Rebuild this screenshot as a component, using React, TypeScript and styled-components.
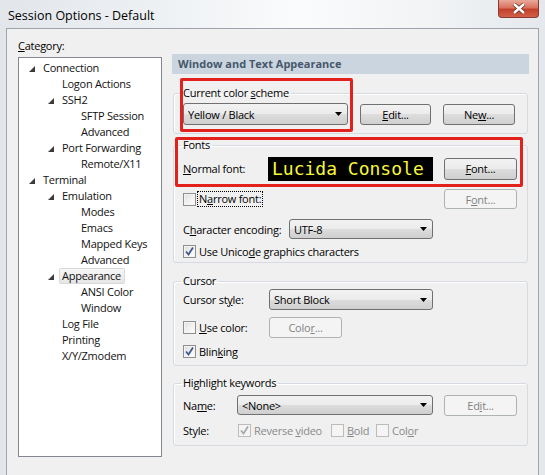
import styled, { createGlobalStyle } from "styled-components";

const GlobalStyle = createGlobalStyle`
  html, body {
    margin: 0;
    padding: 0;
  }
  body {
    font-family: "Open Sans", "Noto Sans", sans-serif;
    font-size: 11px;
    letter-spacing: -0.25px;
    color: #000;
  }
  * {
    box-sizing: border-box;
  }
`;

const tree = [
    {text: "Connection", level: 0, open: true},
    {text: "Logon Actions", level: 1},
    {text: "SSH2", level: 1, open: true},
    {text: "SFTP Session", level: 2},
    {text: "Advanced", level: 2},
    {text: "Port Forwarding", level: 1, open: true},
    {text: "Remote/X11", level: 2},
    {text: "Terminal", level: 0, open: true},
    {text: "Emulation", level: 1, open: true},
    {text: "Modes", level: 2},
    {text: "Emacs", level: 2},
    {text: "Mapped Keys", level: 2},
    {text: "Advanced", level: 2},
    {text: "Appearance", level: 1, open: true, selected: true},
    {text: "ANSI Color", level: 2},
    {text: "Window", level: 2},
    {text: "Log File", level: 1},
    {text: "Printing", level: 1},
    {text: "X/Y/Zmodem", level: 1},
];

const Check = ({checked, disabled}: { checked?: boolean; disabled?: boolean }) => (
    <CheckBox $disabled={disabled}>
        {checked && (
            <svg width="11" height="11" viewBox="0 0 11 11">
                <path d="M2 5.5 L4.5 8.5 L9 1.5" fill="none"
                      stroke={disabled ? "#a8a8a8" : "#3d5a8c"} strokeWidth="1.8"/>
            </svg>
        )}
    </CheckBox>
);

const Combo = ({value, width}: { value: string; width: number }) => (
    <ComboBox $w={width}>
        <span>{value}</span>
        <svg width="7" height="4" viewBox="0 0 7 4">
            <polygon points="0,0 7,0 3.5,4" fill="#000"/>
        </svg>
    </ComboBox>
);

export default function App() {
    return (
        <>
            <GlobalStyle/>
            <Window>
                <TitleBar>
                    <Title>Session Options - Default</Title>
                    <CloseButton>
                        <svg width="14" height="11" viewBox="0 0 14 11">
                            <path d="M2 1 L12 10 M12 1 L2 10" stroke="#6b2a20" strokeWidth="4"/>
                            <path d="M2 1 L12 10 M12 1 L2 10" stroke="#fff" strokeWidth="2.4"/>
                        </svg>
                    </CloseButton>
                </TitleBar>
                <Client>
                    <LeftCol>
                        <CategoryLabel><u>C</u>ategory:</CategoryLabel>
                        <Tree>
                            {tree.map((item, index) => (
                                <TreeRow key={index} $level={item.level}>
                                    <Expander>
                                        {item.open && (
                                            <svg width="6" height="6" viewBox="0 0 6 6">
                                                <polygon points="6,0 6,6 0,6" fill="#3a3a3a"/>
                                            </svg>
                                        )}
                                    </Expander>
                                    <TreeLabel $selected={item.selected}>{item.text}</TreeLabel>
                                </TreeRow>
                            ))}
                        </Tree>
                    </LeftCol>
                    <RightCol>
                        <Header>Window and Text Appearance</Header>

                        <Group $mt={12}>
                            <Legend>Current color <u>s</u>cheme</Legend>
                            <GroupBody $pt={3} $pb={8}>
                                <Row $h={22}>
                                    <Combo value="Yellow / Black" width={165}/>
                                    <Button $w={71} $ml={12}><u>E</u>dit...</Button>
                                    <Button $w={72} $ml={12}>Ne<u>w</u>...</Button>
                                </Row>
                            </GroupBody>
                        </Group>

                        <Group $mt={4}>
                            <Legend>Fonts</Legend>
                            <GroupBody $pt={4} $pb={4}>
                                <Row $h={25}>
                                    <Label $w={85}><u>N</u>ormal font:</Label>
                                    <FontPreview>Lucida Console</FontPreview>
                                    <Button $w={73} $ml="auto" $h={22}><u>F</u>ont...</Button>
                                </Row>
                                <Row $h={20} $mt={8}>
                                    <Check/>
                                    <FocusLabel>N<u>a</u>rrow font:</FocusLabel>
                                    <Button $w={73} $ml="auto" $h={20} disabled>F<u>o</u>nt...</Button>
                                </Row>
                                <Row $h={20} $mt={10}>
                                    <Label $w={106}>C<u>h</u>aracter encoding:</Label>
                                    <Combo value="UTF-8" width={144}/>
                                </Row>
                                <Row $h={14} $mt={5}>
                                    <Check checked/>
                                    <CheckText>Use Unico<u>d</u>e graphics characters</CheckText>
                                </Row>
                            </GroupBody>
                        </Group>

                        <Group $mt={11}>
                            <Legend>Cursor</Legend>
                            <GroupBody $pt={1} $pb={7}>
                                <Row $h={21}>
                                    <Label $w={86}>Cursor st<u>y</u>le:</Label>
                                    <Combo value="Short Block" width={164}/>
                                </Row>
                                <Row $h={21} $mt={7}>
                                    <CheckGroup $w={86}>
                                        <Check/>
                                        <CheckText><u>U</u>se color:</CheckText>
                                    </CheckGroup>
                                    <Button $w={73} $h={21} disabled>Colo<u>r</u>...</Button>
                                </Row>
                                <Row $h={14} $mt={6}>
                                    <Check checked/>
                                    <CheckText>Blin<u>k</u>ing</CheckText>
                                </Row>
                            </GroupBody>
                        </Group>

                        <Group $mt={10}>
                            <Legend>Highlight keywords</Legend>
                            <GroupBody $pt={5} $pb={8}>
                                <Row $h={20}>
                                    <Label $w={54}>Na<u>m</u>e:</Label>
                                    <Combo value="<None>" width={196}/>
                                    <Button $w={73} $ml="auto" $h={21} disabled>Ed<u>i</u>t...</Button>
                                </Row>
                                <Row $h={14} $mt={8}>
                                    <Label $w={55}>Style:</Label>
                                    <CheckGroup $w={93}>
                                        <Check checked disabled/>
                                        <CheckText $disabled>Reverse <u>v</u>ideo</CheckText>
                                    </CheckGroup>
                                    <CheckGroup $w={45}>
                                        <Check disabled/>
                                        <CheckText $disabled><u>B</u>old</CheckText>
                                    </CheckGroup>
                                    <CheckGroup>
                                        <Check disabled/>
                                        <CheckText $disabled>Col<u>o</u>r</CheckText>
                                    </CheckGroup>
                                </Row>
                            </GroupBody>
                        </Group>

                        <RedMark $x={8} $y={49} $w={173} $h={54}/>
                        <RedMark $x={3} $y={108} $w={348} $h={50}/>
                    </RightCol>
                </Client>
            </Window>
        </>
    );
}

const Window = styled.div`
    width: 545px;
    height: 475px;
    overflow: hidden;
    display: flex;
    flex-direction: column;
    background: linear-gradient(90deg, #e2e6ea 0%, #eef1f4 30%, #fafbfc 55%, #f1f3f5 80%, #e4e8ec 100%);
`
const TitleBar = styled.div`
    height: 28px;
    flex-shrink: 0;
    display: flex;
    align-items: flex-start;
    justify-content: space-between;
    padding: 0 6px 0 8px;
`
const Title = styled.div`
    font-size: 12.5px;
    letter-spacing: 0;
    line-height: 18px;
    padding-top: 7px;
    color: #000;
`
const CloseButton = styled.div`
    width: 41px;
    height: 18px;
    display: flex;
    align-items: center;
    justify-content: center;
    border: 1px solid #8a3a2e;
    border-top: none;
    border-radius: 0 0 4px 4px;
    background: linear-gradient(180deg, #e9a99a 0%, #d9735f 45%, #c4402a 55%, #d2604a 100%);
`
const Client = styled.div`
    margin-left: 6px;
    width: 533px;
    flex: 1;
    background: #f0f0f0;
    border: 1px solid #9ea4aa;
    border-bottom: none;
    display: flex;
    align-items: flex-start;
    gap: 10px;
    padding-left: 11px;
`
const LeftCol = styled.div`
    width: 144px;
    padding-top: 9px;
    display: flex;
    flex-direction: column;
`
const CategoryLabel = styled.div`
    height: 15px;
    line-height: 15px;
    margin-bottom: 4px;
`
const Tree = styled.div`
    height: 400px;
    background: #fff;
    border: 1px solid #828790;
    padding-top: 2px;
`
const TreeRow = styled.div<{ $level: number }>`
    height: 16px;
    display: flex;
    align-items: center;
    padding-left: ${props => 10 + props.$level * 19}px;
`
const Expander = styled.div`
    width: 11px;
    height: 16px;
    display: flex;
    align-items: center;
    padding-top: 2px;
`
const TreeLabel = styled.span<{ $selected?: boolean }>`
    height: 16px;
    line-height: 14px;
    padding: 0 3px 0 2px;
    white-space: nowrap;
    color: #111;
    border: 1px solid ${props => props.$selected ? "#d9d9d9" : "transparent"};
    border-radius: 2px;
    background: ${props => props.$selected ? "linear-gradient(180deg, #f6f6f6, #e6e6e6)" : "transparent"};
`
const RightCol = styled.div`
    position: relative;
    width: 357px;
    padding-top: 25px;
    display: flex;
    flex-direction: column;
`
const Header = styled.div`
    height: 20px;
    line-height: 20px;
    padding-left: 6px;
    background: #cbd5df;
    color: #46586b;
    font-weight: 700;
    letter-spacing: 0;
`
const Group = styled.fieldset<{ $mt: number }>`
    margin: ${props => props.$mt}px 1px 0 1px;
    padding: 0;
    min-inline-size: 0;
    border: 1px solid #d5dbe0;
    border-radius: 3px;
    box-shadow: inset 1px 1px 0 #fff;
`
const Legend = styled.legend`
    margin-left: 7px;
    padding: 0 2px;
    line-height: 14px;
    height: 14px;
`
const GroupBody = styled.div<{ $pt: number; $pb: number }>`
    padding: ${props => props.$pt}px 10px ${props => props.$pb}px 9px;
    display: flex;
    flex-direction: column;
`
const Row = styled.div<{ $h: number; $mt?: number }>`
    height: ${props => props.$h}px;
    margin-top: ${props => props.$mt ?? 0}px;
    display: flex;
    align-items: center;
`
const Label = styled.span<{ $w?: number }>`
    width: ${props => props.$w ? props.$w + "px" : "auto"};
    flex-shrink: 0;
    white-space: nowrap;
`
const CheckGroup = styled.div<{ $w?: number }>`
    width: ${props => props.$w ? props.$w + "px" : "auto"};
    flex-shrink: 0;
    display: flex;
    align-items: center;
`
const CheckBox = styled.span<{ $disabled?: boolean }>`
    width: 13px;
    height: 13px;
    flex-shrink: 0;
    display: flex;
    align-items: center;
    justify-content: center;
    border: 1px solid ${props => props.$disabled ? "#bcbcbc" : "#8e8f8f"};
    background: ${props => props.$disabled
            ? "#f4f4f4"
            : "linear-gradient(135deg, #dcdcdc 0%, #f0f0f0 50%, #ffffff 100%)"};
    box-shadow: inset 0 0 0 1px #f4f4f4;
`
const CheckText = styled.span<{ $disabled?: boolean }>`
    margin-left: 3px;
    white-space: nowrap;
    color: ${props => props.$disabled ? "#8a8a8a" : "#000"};
`
const FocusLabel = styled.span`
    margin-left: 2px;
    padding: 0 1px;
    white-space: nowrap;
    outline: 1px dotted #000;
    line-height: 14px;
`
const ComboBox = styled.div<{ $w: number }>`
    width: ${props => props.$w}px;
    height: 100%;
    flex-shrink: 0;
    display: flex;
    align-items: center;
    justify-content: space-between;
    padding: 0 5px 0 4px;
    border: 1px solid #707070;
    border-radius: 3px;
    background: linear-gradient(180deg, #f2f2f2 0%, #ebebeb 50%, #dddddd 50%, #cfcfcf 100%);
    white-space: nowrap;
`
const Button = styled.button<{ $w: number; $h?: number; $ml?: number | "auto" }>`
    width: ${props => props.$w}px;
    height: ${props => props.$h ?? 21}px;
    margin-left: ${props => props.$ml === "auto" ? "auto" : (props.$ml ?? 0) + "px"};
    flex-shrink: 0;
    padding: 0;
    font: inherit;
    letter-spacing: inherit;
    color: #000;
    border: 1px solid #707070;
    border-radius: 3px;
    background: linear-gradient(180deg, #f2f2f2 0%, #ebebeb 50%, #dddddd 50%, #cfcfcf 100%);

    &:disabled {
        color: #838383;
        border-color: #adb2b5;
        background: #f4f4f4;
    }
`
const FontPreview = styled.div`
    width: 165px;
    height: 24px;
    flex-shrink: 0;
    background: #000;
    color: #f7f73a;
    font-family: "DejaVu Sans Mono", "Liberation Mono", monospace;
    font-size: 18px;
    letter-spacing: 0;
    line-height: 24px;
    padding-left: 4px;
    white-space: nowrap;
`
const RedMark = styled.div<{ $x: number; $y: number; $w: number; $h: number }>`
    position: absolute;
    left: ${props => props.$x}px;
    top: ${props => props.$y}px;
    width: ${props => props.$w}px;
    height: ${props => props.$h}px;
    border: 3px solid #e3211c;
    border-radius: 2px;
    pointer-events: none;
`
